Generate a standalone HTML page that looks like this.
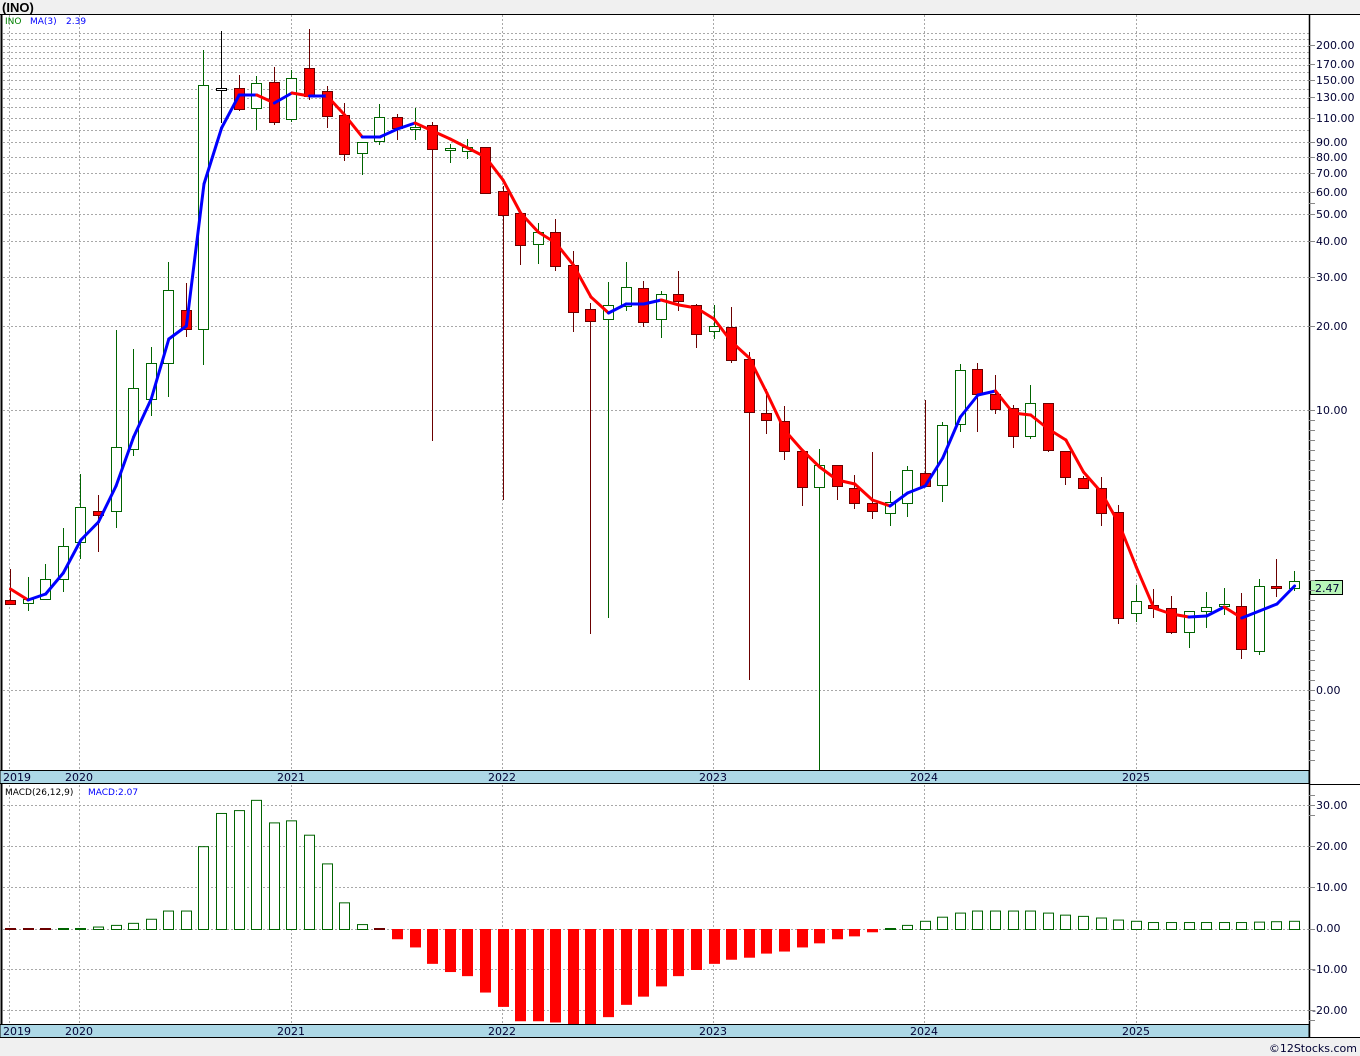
<!DOCTYPE html>
<html><head><meta charset="utf-8"><style>
html,body{margin:0;padding:0;background:#fff;width:1360px;height:1056px;overflow:hidden}
svg{display:block;font-family:"DejaVu Sans","Liberation Sans",sans-serif}
</style></head><body>
<svg id="s" width="1360" height="1056" xmlns="http://www.w3.org/2000/svg">
<rect x="0" y="0" width="1360" height="14" fill="#f0f0f0"/>
<rect x="0" y="1038" width="1360" height="18" fill="#f0f0f0"/>
<text x="2" y="12" font-size="13" font-weight="bold" font-family="Liberation Sans, sans-serif" fill="#000">(INO)</text>
<g id="grid" stroke="#a8a8a8" stroke-width="1" stroke-dasharray="2,2" fill="none"></g>
<g id="candles"></g>
<g id="ma" fill="none" stroke-width="3" stroke-linejoin="round" stroke-linecap="round"></g>
<g id="macd"></g>
<!-- frames -->
<line x1="1309.5" y1="14" x2="1309.5" y2="1038" stroke="#000" stroke-width="1.5"/>
<line x1="0" y1="14.5" x2="1360" y2="14.5" stroke="#000"/>
<line x1="1.5" y1="14" x2="1.5" y2="770" stroke="#000" stroke-width="2"/>
<line x1="1.5" y1="784" x2="1.5" y2="1024" stroke="#000" stroke-width="2"/>
<rect x="0" y="770.5" width="1309" height="13" fill="#add8e6" stroke="#000"/>
<line x1="1309" y1="784.5" x2="1360" y2="784.5" stroke="#000"/>
<rect x="0" y="1024.5" width="1309" height="13" fill="#add8e6" stroke="#000"/>
<line x1="0" y1="1037.5" x2="1360" y2="1037.5" stroke="#000"/>
<g font-size="11" fill="#000033">
<text x="3" y="781">2019</text><text x="65" y="781">2020</text><text x="277" y="781">2021</text><text x="488" y="781">2022</text><text x="699" y="781">2023</text><text x="910" y="781">2024</text><text x="1122" y="781">2025</text>
<text x="3" y="1035">2019</text><text x="65" y="1035">2020</text><text x="277" y="1035">2021</text><text x="488" y="1035">2022</text><text x="699" y="1035">2023</text><text x="910" y="1035">2024</text><text x="1122" y="1035">2025</text>
</g>
<g font-size="11" fill="#000033">
<text x="1316" y="49">200.00</text><text x="1316" y="68">170.00</text><text x="1316" y="84">150.00</text><text x="1316" y="101">130.00</text><text x="1316" y="122">110.00</text><text x="1316" y="146">90.00</text><text x="1316" y="161">80.00</text><text x="1316" y="177">70.00</text><text x="1316" y="196">60.00</text><text x="1316" y="218">50.00</text><text x="1316" y="245">40.00</text><text x="1316" y="281">30.00</text><text x="1316" y="330">20.00</text><text x="1316" y="414">10.00</text><text x="1316" y="694">0.00</text>
<text x="1316" y="809">30.00</text><text x="1316" y="850">20.00</text><text x="1316" y="891">10.00</text><text x="1316" y="932">0.00</text><text x="1312" y="973">-10.00</text><text x="1312" y="1014">-20.00</text>
</g>
<rect x="1310.5" y="580.5" width="32" height="14" fill="#b8f5b8" stroke="#000"/>
<text x="1315" y="592" font-size="11" fill="#000033">2.47</text>
<g font-size="9" font-family="DejaVu Sans, sans-serif">
<text x="5" y="24" fill="#008000">INO</text><text x="30" y="24" fill="#0000ff">MA(3)</text><text x="66" y="24" fill="#0000ff">2.39</text>
<text x="5" y="795" fill="#000">MACD(26,12,9)</text><text x="88" y="795" fill="#0000ff">MACD:2.07</text>
</g>
<text x="1357" y="1052" font-size="11" text-anchor="end" fill="#000033">©12Stocks.com</text>
</svg>
<script>
var NS="http://www.w3.org/2000/svg";
function el(p,t,a){var e=document.createElementNS(NS,t);for(var k in a)e.setAttribute(k,a[k]);p.appendChild(e);return e;}
var g=document.getElementById('grid');
var hl=[33,39,46,52,58,65,72,80,89,98,107,118,130,142,157,173,192,214,241,277,326,410,690];
hl.forEach(function(y){el(g,'line',{x1:3,x2:1309,y1:y+.5,y2:y+.5});});
[805,846,887,929,969,1010].forEach(function(y){el(g,'line',{x1:3,x2:1309,y1:y+.5,y2:y+.5});});
[9,79,291,502,713,924,1136].forEach(function(x){el(g,'line',{x1:x+.5,x2:x+.5,y1:15,y2:770});el(g,'line',{x1:x+.5,x2:x+.5,y1:785,y2:1024});});
var sv=document.getElementById('s');
var tk=[45,64,80,97,118,142,157,173,192,203,214,241,277,326,410,690];
for(var y=420;y<770;y+=10)tk.push(y);
tk.forEach(function(y){el(sv,'line',{x1:1309,x2:1315,y1:y+.5,y2:y+.5,stroke:'#888'});});
[795,805,815,846,887,929,969,1010,1020].forEach(function(y){el(sv,'line',{x1:1309,x2:1315,y1:y+.5,y2:y+.5,stroke:'#888'});});
// candles: [bodyTop, bodyBot, wickTop, wickBot, color]
var C=[[600,604,569,604,'r'],[599,603,577,611,'g'],[579,599,564,600,'g'],[546,579,528,592,'g'],[507,542,474,559,'g'],[511,515,495,552,'r'],[447,511,330,528,'g'],[388,449,349,456,'g'],[363,399,347,416,'g'],[290,363,262,397,'g'],[310,329,283,337,'r'],[85,329,50,365,'g'],[88,90,31,123,'k'],[88,109,75,111,'r'],[83,108,76,130,'g'],[82,122,67,125,'r'],[78,119,70,122,'g'],[68,96,29,100,'r'],[91,116,86,128,'r'],[115,154,103,161,'r'],[142,153,142,175,'g'],[117,141,104,145,'g'],[117,128,114,140,'r'],[127,129,108,140,'g'],[125,149,122,441,'r'],[148,150,144,163,'g'],[147,151,139,159,'g'],[147,193,147,193,'r'],[191,215,186,500,'r'],[213,245,213,265,'r'],[232,244,223,264,'g'],[232,266,219,271,'r'],[265,312,251,332,'r'],[309,321,303,634,'r'],[305,319,282,618,'g'],[287,306,262,311,'g'],[288,322,281,327,'r'],[294,319,291,338,'g'],[294,301,271,311,'r'],[305,334,304,348,'r'],[326,331,305,339,'g'],[327,360,307,363,'r'],[359,412,352,680,'r'],[413,420,389,434,'r'],[421,451,406,460,'r'],[451,487,451,506,'r'],[465,487,449,770,'g'],[465,486,465,500,'r'],[488,503,475,509,'r'],[503,511,452,519,'r'],[502,513,491,526,'g'],[470,503,466,517,'g'],[473,486,400,486,'r'],[425,485,422,502,'g'],[370,424,364,432,'g'],[369,394,363,432,'r'],[394,409,375,414,'r'],[408,436,405,448,'r'],[403,436,385,439,'g'],[403,450,403,452,'r'],[451,477,451,485,'r'],[478,488,476,489,'r'],[488,513,477,526,'r'],[512,618,505,624,'r'],[601,613,585,622,'g'],[605,608,589,618,'r'],[608,632,596,634,'r'],[611,632,611,648,'g'],[607,611,592,628,'g'],[604,606,588,615,'g'],[606,649,593,659,'r'],[586,651,579,655,'g'],[586,588,559,597,'r'],[581,588,571,591,'g']];
var cg=document.getElementById('candles');
function X(i){return 10+i*17.59;}
C.forEach(function(c,i){var x=Math.round(X(i));
 var st=c[4]=='r'?'#6b0000':(c[4]=='g'?'#006400':'#000');
 el(cg,'line',{x1:x+.5,x2:x+.5,y1:c[2],y2:c[3],stroke:st,'stroke-width':1});
 var h=c[1]-c[0]; if(h<2){el(cg,'rect',{x:x-5,y:c[0],width:11,height:2,fill:st});return;}
 el(cg,'rect',{x:x-4.5,y:c[0]+.5,width:10,height:h,fill:c[4]=='r'?'#ff0000':'#fff',stroke:st,'stroke-width':1});
});
var M=[589,600,594,573,540,522,486,437,399,339,326,184,128,95,95,103,93,96,96,115,137,137,129,123,131,139,148,157,180,213,232,243,265,297,313,304,304,300,305,308,319,342,358,393,430,450,467,480,484,500,506,493,486,458,417,395,391,413,415,429,440,472,492,523,567,608,614,617,616,607,618,611,604,586];
var mg=document.getElementById('ma');
for(var i=0;i<M.length-1;i++){el(mg,'line',{x1:X(i)+.5,y1:M[i],x2:X(i+1)+.5,y2:M[i+1],stroke:M[i+1]>M[i]?'#ff0000':'#0000ff'});}
var V=[-.4,-.4,-.3,.3,.4,.6,1,1.5,2.5,4.5,4.5,20.2,28.3,29,31.5,26,26.5,23,16,6.5,1.2,-.3,-2.5,-4.5,-8.5,-10.5,-11.5,-15.5,-19,-22.5,-22.5,-22.8,-23.5,-23.5,-21.5,-18.5,-16.5,-14,-11.5,-10,-8.5,-7.5,-7,-6,-5.5,-4.5,-3.5,-2.5,-1.8,-.8,.3,1,2,3,4,4.5,4.5,4.5,4.5,4,3.5,3.2,2.8,2.3,2,1.7,1.7,1.7,1.7,1.7,1.7,1.8,1.9,2];
var bg=document.getElementById('macd');
V.forEach(function(v,i){var x=Math.round(X(i))-5;var h=Math.abs(v)*4.1;
 if(h<2){el(bg,'rect',{x:x,y:928,width:11,height:2,fill:v<0?'#6b0000':'#006400'});return;}
 if(v>0)el(bg,'rect',{x:x+.5,y:929.5-h,width:10,height:h,fill:'#fff',stroke:'#006400','stroke-width':1});
 else el(bg,'rect',{x:x,y:929,width:11,height:h,fill:'#ff0000'});
});
</script>
</body></html>
